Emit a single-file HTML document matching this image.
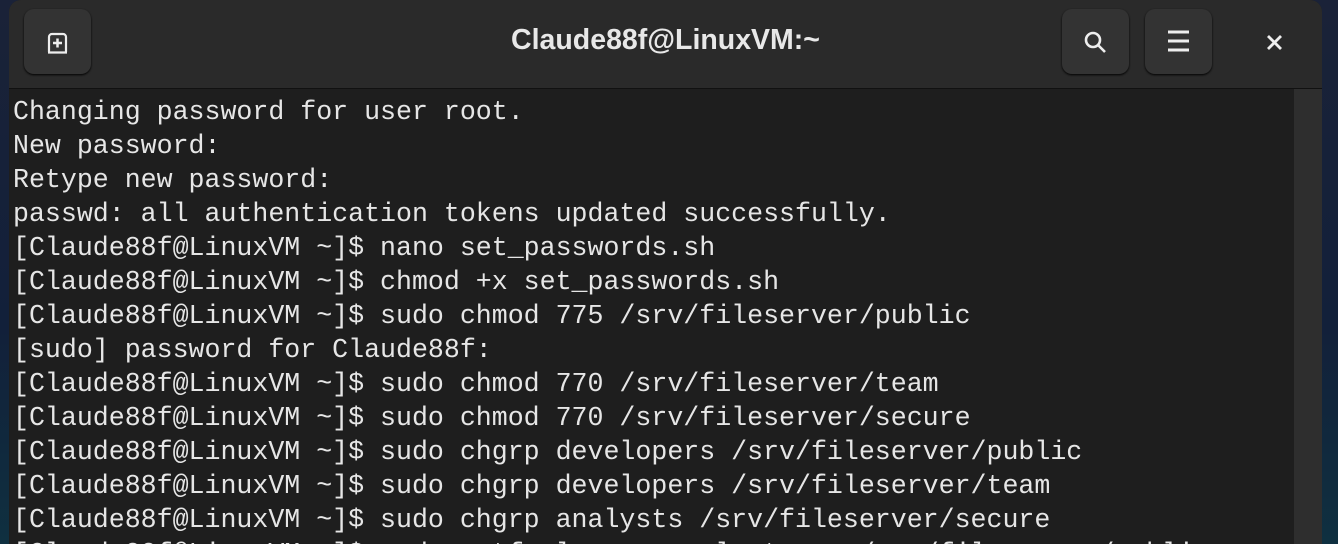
<!DOCTYPE html>
<html><head><meta charset="utf-8"><style>
html,body{margin:0;padding:0;width:1338px;height:544px;overflow:hidden;}
body{background:linear-gradient(180deg,#1a2238,#12203a 60%,#0f3040);position:relative;}
.win{position:absolute;left:9px;top:0;width:1313px;height:544px;background:#1e1e1e;border-radius:12px 12px 0 0;overflow:hidden;}
.hdr{position:absolute;left:0;top:0;width:100%;height:88px;background:#2a2a2a;border-bottom:1px solid #111;}
.btn{position:absolute;top:9px;width:67px;height:65px;background:#333;border-radius:10px;box-shadow:0 1px 2px #000;}
.title{position:absolute;left:0;width:100%;top:24px;text-align:center;color:#e8e8e8;font:bold 28.5px "Liberation Sans",sans-serif;}
.sb{position:absolute;right:0;top:89px;width:28px;height:480px;background:#2e2e2e;}
pre{position:absolute;left:4px;top:95px;margin:0;font:26.6px/34px "Liberation Mono","DejaVu Sans Mono",monospace;color:#e6e6e6;}
</style></head><body>
<div class="win">
<div class="hdr">
<div class="btn" style="left:15px"><svg width="67" height="65" viewBox="0 0 67 65"><path d="M25 43 V28 a3 3 0 0 1 3-3 h11 a3 3 0 0 1 3 3 V43 M24 43.5 H43" fill="none" stroke="#eee" stroke-width="2.2"/><path d="M33.5 29.5v9M29 34h9" stroke="#eee" stroke-width="2.5"/></svg></div>
<div class="title">Claude88f@LinuxVM:~</div>
<div class="btn" style="left:1053px"><svg width="67" height="65" viewBox="0 0 67 65"><circle cx="31" cy="31" r="7" fill="none" stroke="#eee" stroke-width="2.6"/><path d="M36 36l7 7" stroke="#eee" stroke-width="2.6"/></svg></div>
<div class="btn" style="left:1136px"><svg width="67" height="65" viewBox="0 0 67 65"><path d="M23 23h21M23 32h21M23 41h21" stroke="#eee" stroke-width="3"/></svg></div>
<svg style="position:absolute;left:1255px;top:32px" width="22" height="22"><path d="M4 4l13 13M17 4L4 17" stroke="#eee" stroke-width="2.8"/></svg>
</div>
<div class="sb"></div>
<pre>Changing password for user root.
New password:
Retype new password:
passwd: all authentication tokens updated successfully.
[Claude88f@LinuxVM ~]$ nano set_passwords.sh
[Claude88f@LinuxVM ~]$ chmod +x set_passwords.sh
[Claude88f@LinuxVM ~]$ sudo chmod 775 /srv/fileserver/public
[sudo] password for Claude88f:
[Claude88f@LinuxVM ~]$ sudo chmod 770 /srv/fileserver/team
[Claude88f@LinuxVM ~]$ sudo chmod 770 /srv/fileserver/secure
[Claude88f@LinuxVM ~]$ sudo chgrp developers /srv/fileserver/public
[Claude88f@LinuxVM ~]$ sudo chgrp developers /srv/fileserver/team
[Claude88f@LinuxVM ~]$ sudo chgrp analysts /srv/fileserver/secure
[Claude88f@LinuxVM ~]$ sudo setfacl -m g:analysts:rx /srv/fileserver/public</pre>
</div>
</body></html>
